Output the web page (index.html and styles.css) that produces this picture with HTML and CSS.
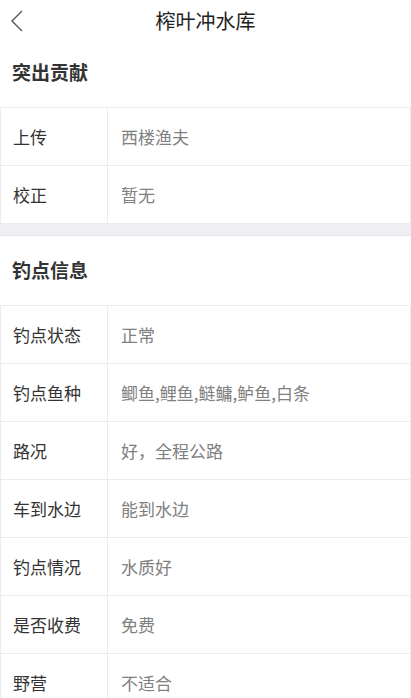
FILE: index.html
```html
<!DOCTYPE html>
<html lang="zh-CN">
<head>
    <meta charset="UTF-8">
    <meta name="viewport" content="width=device-width, initial-scale=1.0">
    <title>榨叶冲水库</title>
    <link rel="stylesheet" href="styles.css">
</head>
<body>
    <!-- Top Bar -->
    <div class="top-bar">
        <a class="back-btn" href="#">
            <svg width="14" height="22" viewBox="0 0 14 22">
                <polyline points="12,1 2,11 12,21" fill="none" stroke="#555" stroke-width="1.4"/>
            </svg>
        </a>
        <h1 class="page-title">榨叶冲水库</h1>
    </div>

    <!-- 突出贡献 -->
    <div class="section">
        <h2 class="section-title">突出贡献</h2>
        <table class="info-table">
            <tr><td class="label">上传</td><td class="value">西楼渔夫</td></tr>
            <tr><td class="label">校正</td><td class="value">暂无</td></tr>
        </table>
    </div>

    <div class="divider"></div>

    <!-- 钓点信息 -->
    <div class="section">
        <h2 class="section-title">钓点信息</h2>
        <table class="info-table">
            <tr><td class="label">钓点状态</td><td class="value">正常</td></tr>
            <tr><td class="label">钓点鱼种</td><td class="value">鲫鱼,鲤鱼,鲢鳙,鲈鱼,白条</td></tr>
            <tr><td class="label">路况</td><td class="value">好，全程公路</td></tr>
            <tr><td class="label">车到水边</td><td class="value">能到水边</td></tr>
            <tr><td class="label">钓点情况</td><td class="value">水质好</td></tr>
            <tr><td class="label">是否收费</td><td class="value">免费</td></tr>
            <tr><td class="label">野营</td><td class="value">不适合</td></tr>
        </table>
    </div>
</body>
</html>
```

FILE: styles.css
```css
/* General Reset */
* {
    margin: 0;
    padding: 0;
    box-sizing: border-box;
}

body {
    font-family: 'Noto Sans CJK SC', 'Noto Sans', sans-serif;
    background-color: #fff;
    color: #333;
}

/* Top Bar */
.top-bar {
    position: relative;
    height: 38px;
    display: flex;
    align-items: center;
    justify-content: center;
}

.back-btn {
    position: absolute;
    left: 10px;
    top: 10px;
    display: block;
    line-height: 0;
}

.page-title {
    font-size: 20px;
    font-weight: 400;
    color: #222;
    line-height: 1;
    margin-top: 4px;
}

/* Sections */
.section-title {
    font-size: 19px;
    font-weight: 700;
    color: #333;
    line-height: 26px;
    padding: 21px 12px 22px;
}

.info-table {
    width: 100%;
    border-collapse: collapse;
    font-size: 17px;
}

.info-table td {
    border: 1px solid #ececec;
    height: 58px;
    vertical-align: middle;
}

.info-table .label {
    width: 107px;
    padding-left: 12px;
    color: #333;
}

.info-table .value {
    padding-left: 13px;
    color: #808080;
}

.divider {
    height: 12px;
    background-color: #efeff3;
    border-bottom: 1px solid #e4e4e8;
}
```
